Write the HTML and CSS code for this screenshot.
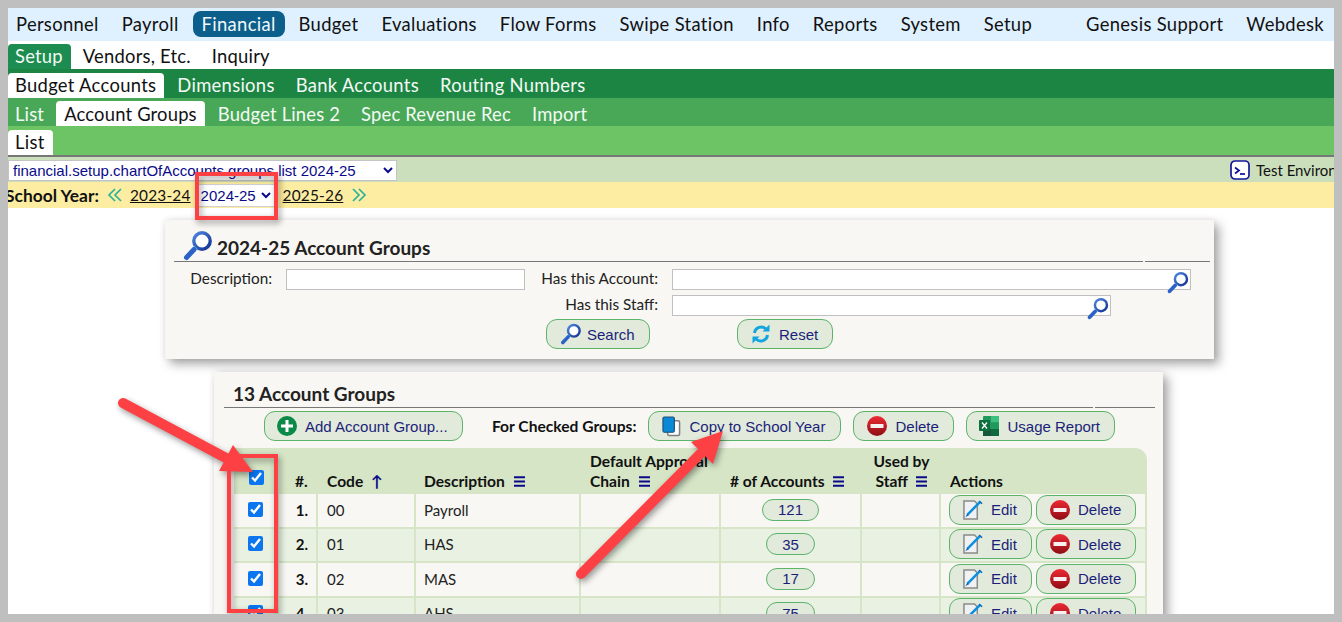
FILE: index.html
```html
<!DOCTYPE html>
<html lang="en">
<head>
<meta charset="utf-8">
<title>2024-25 Account Groups</title>
<link rel="stylesheet" href="styles.css">
</head>
<body>
<svg class="defs" aria-hidden="true">
  <defs>
    <linearGradient id="redg" x1="0" y1="0" x2="0" y2="1"><stop offset="0" stop-color="#ee2a33"/><stop offset="1" stop-color="#8e0d14"/></linearGradient>
    <linearGradient id="ringg" x1="0" y1="0" x2="1" y2="1"><stop offset="0" stop-color="#4f86e0"/><stop offset="1" stop-color="#12318f"/></linearGradient>
    <symbol id="i-mag" viewBox="0 0 30 31">
      <circle cx="19" cy="11" r="8.2" fill="#fff" stroke="url(#ringg)" stroke-width="3.4"/>
      <path d="M13 17.5 11 19.5" stroke="#5fc3e8" stroke-width="4"/>
      <path d="M11 19.5 3.5 27.5" stroke="#2c62c8" stroke-width="5" stroke-linecap="round"/>
    </symbol>
    <symbol id="i-plus" viewBox="0 0 20 20">
      <circle cx="10" cy="10" r="10" fill="#0b8a47"/>
      <path d="M10 4v12M4 10h12" stroke="#fff" stroke-width="3"/>
    </symbol>
    <symbol id="i-minus" viewBox="0 0 20 20">
      <circle cx="10" cy="10" r="10" fill="url(#redg)"/>
      <rect x="3.5" y="8" width="13" height="4" rx=".5" fill="#f6f0f0"/>
    </symbol>
    <symbol id="i-copy" viewBox="0 0 20 22">
      <rect x="6" y="5" width="12.5" height="15.5" rx="1.5" fill="#fff" stroke="#808080" stroke-width="1.6"/>
      <rect x="1" y="1" width="12" height="16" rx="1.5" fill="#0a8ad6" stroke="#1f4d7a" stroke-width="1.2"/>
    </symbol>
    <symbol id="i-xls" viewBox="0 0 20 20">
      <rect x="4" y="0" width="16" height="20" rx="1" fill="#1f9a5c"/>
      <rect x="12" y="0" width="8" height="6.5" fill="#3cc07f"/>
      <rect x="12" y="6.5" width="8" height="6.5" fill="#1f9a5c"/>
      <rect x="12" y="13" width="8" height="7" fill="#0f6b3d"/>
      <rect x="4" y="13" width="8" height="7" fill="#14573a"/>
      <rect x="0" y="4" width="11" height="11" rx="1" fill="#0f6e3e"/>
      <path d="M3 6.5 8 12.5M8 6.5 3 12.5" stroke="#fff" stroke-width="1.3"/>
    </symbol>
    <symbol id="i-edit" viewBox="0 0 21 21">
      <path d="M1 1h11l3 3v16H1z" fill="#f0f1f2" stroke="#8b8b8b" stroke-width="1.6"/>
      <path d="M4.5 15.5 18 2" stroke="#0b8fe0" stroke-width="2.6"/>
      <path d="M2.5 18 4.5 14.5 6 16z" fill="#0b5fa8"/>
      <path d="M17 1l3 3" stroke="#0a6ab5" stroke-width="1.6"/>
    </symbol>
    <symbol id="i-reset" viewBox="0 0 20 20">
      <path d="M3.5 9A6.8 6.8 0 0 1 15 5" fill="none" stroke="#13a5dd" stroke-width="3"/>
      <path d="M11.5 7.5h7v-7z" fill="#13a5dd"/>
      <path d="M16.5 11A6.8 6.8 0 0 1 5 15" fill="none" stroke="#13a5dd" stroke-width="3"/>
      <path d="M8.5 12.5h-7v7z" fill="#13a5dd"/>
    </symbol>
    <symbol id="i-term" viewBox="0 0 20 20">
      <rect x="1" y="1" width="18" height="18" rx="4" fill="#fff" stroke="#17179a" stroke-width="1.7"/>
      <path d="M5 7.5 9 10.5 5 13.5" fill="none" stroke="#0d0da0" stroke-width="1.7"/>
      <path d="M10 14h5" stroke="#0d0da0" stroke-width="1.7"/>
    </symbol>
    <symbol id="i-left" viewBox="0 0 16 16">
      <path d="M8 2 2 8l6 6M14 2 8 8l6 6" fill="none" stroke="#2bb39a" stroke-width="1.7"/>
    </symbol>
    <symbol id="i-right" viewBox="0 0 16 16">
      <path d="M2 2l6 6-6 6M8 2l6 6-6 6" fill="none" stroke="#2bb39a" stroke-width="1.7"/>
    </symbol>
    <symbol id="i-menu" viewBox="0 0 11 11">
      <path d="M0 1.2h11M0 5.5h11M0 9.8h11" stroke="#0a0a8a" stroke-width="2"/>
    </symbol>
  </defs>
</svg>

<div class="frame">
  <nav class="nav nav-top">
    <a class="nav-item nav-first">Personnel</a>
    <a class="nav-item">Payroll</a>
    <a class="nav-item nav-current">Financial</a>
    <a class="nav-item">Budget</a>
    <a class="nav-item">Evaluations</a>
    <a class="nav-item">Flow Forms</a>
    <a class="nav-item">Swipe Station</a>
    <a class="nav-item">Info</a>
    <a class="nav-item">Reports</a>
    <a class="nav-item">System</a>
    <a class="nav-item">Setup</a>
    <a class="nav-item nav-push">Genesis Support</a>
    <a class="nav-item">Webdesk</a>
  </nav>
  <nav class="nav nav-l2">
    <a class="tab tab-green">Setup</a>
    <a class="tab tab-dark">Vendors, Etc.</a>
    <a class="tab tab-dark">Inquiry</a>
  </nav>
  <nav class="nav nav-l3">
    <a class="tab tab-white">Budget Accounts</a>
    <a class="tab">Dimensions</a>
    <a class="tab">Bank Accounts</a>
    <a class="tab">Routing Numbers</a>
  </nav>
  <nav class="nav nav-l4">
    <a class="tab">List</a>
    <a class="tab tab-white">Account Groups</a>
    <a class="tab">Budget Lines 2</a>
    <a class="tab">Spec Revenue Rec</a>
    <a class="tab">Import</a>
  </nav>
  <nav class="nav nav-l5">
    <a class="tab tab-white">List</a>
  </nav>

  <div class="env-row">
    <select class="page-select"><option>financial.setup.chartOfAccounts.groups.list 2024-25</option></select>
    <div class="env">
      <svg class="env-icon"><use href="#i-term"/></svg>
      <span>Test Environment</span>
    </div>
  </div>

  <div class="year-row">
    <b class="year-label">School Year:</b>
    <svg class="chev"><use href="#i-left"/></svg>
    <a class="year-link">2023-24</a>
    <select class="year-select"><option>2024-25</option></select>
    <a class="year-link">2025-26</a>
    <svg class="chev"><use href="#i-right"/></svg>
  </div>

  <section class="panel panel-search">
    <div class="panel-head">
      <h2 class="panel-title">
        <svg class="title-icon"><use href="#i-mag"/></svg>
        2024-25 Account Groups
      </h2>
      <span class="panel-tail"></span>
    </div>
    <div class="search-grid">
      <label class="lbl">Description:</label>
      <input class="field" type="text">
      <label class="lbl">Has this Account:</label>
      <div class="field field-wide"><svg class="field-icon"><use href="#i-mag"/></svg></div>
      <label class="lbl lbl-second">Has this Staff:</label>
      <div class="field field-mid"><svg class="field-icon"><use href="#i-mag"/></svg></div>
    </div>
    <div class="search-actions">
      <a class="btn btn-search"><svg class="ico ico-mag"><use href="#i-mag"/></svg>Search</a>
      <a class="btn btn-reset"><svg class="ico"><use href="#i-reset"/></svg>Reset</a>
    </div>
  </section>

  <section class="panel panel-list">
    <div class="panel-head panel-head-list">
      <h2 class="panel-title">13 Account Groups</h2>
      <span class="panel-tail"></span>
    </div>
    <div class="toolbar">
      <a class="btn btn-add"><svg class="ico"><use href="#i-plus"/></svg>Add Account Group...</a>
      <b class="toolbar-label">For Checked Groups:</b>
      <a class="btn btn-copy"><svg class="ico ico-copy"><use href="#i-copy"/></svg>Copy to School Year</a>
      <a class="btn btn-del"><svg class="ico"><use href="#i-minus"/></svg>Delete</a>
      <a class="btn btn-usage"><svg class="ico"><use href="#i-xls"/></svg>Usage Report</a>
    </div>
    <table class="grid">
      <colgroup>
        <col class="c-check"><col class="c-num"><col class="c-code"><col class="c-desc">
        <col class="c-chain"><col class="c-acc"><col class="c-used"><col class="c-act">
      </colgroup>
      <thead>
        <tr>
          <th class="center th-check"><input class="chk" type="checkbox" checked></th>
          <th class="th-num">#.</th>
          <th>Code <span class="sort">↑</span></th>
          <th class="col-desc">Description <svg class="menu"><use href="#i-menu"/></svg></th>
          <th>Default Approval<br>Chain <svg class="menu"><use href="#i-menu"/></svg></th>
          <th># of Accounts <svg class="menu"><use href="#i-menu"/></svg></th>
          <th class="center">Used by<br>Staff <svg class="menu"><use href="#i-menu"/></svg></th>
          <th>Actions</th>
        </tr>
      </thead>
      <tbody>
        <tr>
          <td class="center"><input class="chk" type="checkbox" checked></td>
          <td class="num">1.</td><td>00</td><td class="col-desc">Payroll</td><td></td>
          <td class="center"><a class="pill pill-wide">121</a></td><td></td>
          <td class="act"><div class="act-row"><a class="btn btn-edit"><svg class="ico"><use href="#i-edit"/></svg>Edit</a><a class="btn"><svg class="ico"><use href="#i-minus"/></svg>Delete</a></div></td>
        </tr>
        <tr>
          <td class="center"><input class="chk" type="checkbox" checked></td>
          <td class="num">2.</td><td>01</td><td class="col-desc">HAS</td><td></td>
          <td class="center"><a class="pill">35</a></td><td></td>
          <td class="act"><div class="act-row"><a class="btn btn-edit"><svg class="ico"><use href="#i-edit"/></svg>Edit</a><a class="btn"><svg class="ico"><use href="#i-minus"/></svg>Delete</a></div></td>
        </tr>
        <tr>
          <td class="center"><input class="chk" type="checkbox" checked></td>
          <td class="num">3.</td><td>02</td><td class="col-desc">MAS</td><td></td>
          <td class="center"><a class="pill">17</a></td><td></td>
          <td class="act"><div class="act-row"><a class="btn btn-edit"><svg class="ico"><use href="#i-edit"/></svg>Edit</a><a class="btn"><svg class="ico"><use href="#i-minus"/></svg>Delete</a></div></td>
        </tr>
        <tr>
          <td class="center"><input class="chk" type="checkbox" checked></td>
          <td class="num">4.</td><td>03</td><td class="col-desc">AHS</td><td></td>
          <td class="center"><a class="pill">75</a></td><td></td>
          <td class="act"><div class="act-row"><a class="btn btn-edit"><svg class="ico"><use href="#i-edit"/></svg>Edit</a><a class="btn"><svg class="ico"><use href="#i-minus"/></svg>Delete</a></div></td>
        </tr>
      </tbody>
    </table>
  </section>
</div>

<svg class="marks" viewBox="0 0 1342 622" aria-hidden="true">
  <rect class="mark-box" x="197" y="174" width="79" height="44"/>
  <rect class="mark-box" x="229" y="456" width="47" height="155"/>
  <path class="mark-line" d="M123 403 226 458"/>
  <path class="mark-head" d="M219 471 233 445 253 472z"/>
  <path class="mark-line" d="M581 574 702 452"/>
  <path class="mark-head" d="M691 442 713 464 723 431z"/>
</svg>
</body>
</html>
```
FILE: styles.css
```css
* { box-sizing: border-box; }
html, body { margin: 0; height: 622px; overflow: hidden; }
body { background: #bfbfbf; font-family: "Lato", "Liberation Sans", sans-serif; color: #111; position: relative; }
a { cursor: pointer; }
.defs { position: absolute; width: 0; height: 0; }

.frame { margin: 8px; width: 1326px; height: 606px; background: #fff; overflow: hidden; }

/* navigation bars */
.nav { display: flex; align-items: flex-end; font-size: 18.4px; letter-spacing: .3px; white-space: nowrap; }
.nav-top { height: 33px; background: #dff0fe; align-items: center; gap: 5px; padding-bottom: 1px; letter-spacing: .32px; }
.nav-item { padding: 0 9px; height: 26px; line-height: 27px; border-radius: 8px; color: #111; }
.nav-first { margin-left: -1px; }
.nav-current { background: #0b5f8a; color: #f2f8fb; }
.nav-push { margin-left: 31px; }
.nav-l2 { height: 28px; background: #fff; gap: 5px; letter-spacing: .22px; }
.nav-l2 .tab:first-child { margin-right: -1px; }
.nav-l3 { height: 29px; background: #1c8544; gap: 5px; }
.nav-l4 { height: 28px; background: #49a858; gap: 5px; letter-spacing: .18px; }
.nav-l4 .tab { line-height: 26px; }
.nav-l4 .tab:first-child { margin-right: -1px; }
.nav-l5 { height: 31px; background: #6cc464; border-bottom: 2px solid #777; padding-bottom: 0; }
.tab { height: 25px; line-height: 25px; padding: 0 8px; color: #f4faf5; border-radius: 4px 4px 0 0; }
.tab:first-child { padding-left: 7px; }
.tab-white { background: #fff; color: #111; }
.tab-green { background: #1c8c50; color: #f4faf5; }
.tab-dark { color: #111; }

/* environment and year rows */
.env-row { height: 25px; background: #ccdfbc; display: flex; align-items: center; }
.page-select { width: 389px; height: 21px; flex: none; margin-top: 1px; font: 15px "Liberation Sans", sans-serif; color: #0a0a8a; background: #fff; border: 1px solid #c4c4c4; border-radius: 0; padding: 0; }
.env { flex: none; margin-left: 833px; display: flex; align-items: center; gap: 6px; font-size: 15px; white-space: nowrap; }
.env-icon { width: 20px; height: 20px; }
.year-row { height: 26px; background: #fdeda2; display: flex; align-items: center; font-size: 15.4px; white-space: nowrap; }
.year-label { margin-left: -3px; font-size: 17.4px; font-weight: 700; color: #111; }
.chev { width: 16px; height: 16px; margin: 0 7px 0 8px; flex: none; }
.chev:last-child { margin: 0 0 0 8px; }
.year-link { text-decoration: underline; color: #111; letter-spacing: .2px; }
.year-select { width: 79px; height: 23px; margin: 1px 8px 0 5px; font: 15px "Liberation Sans", sans-serif; color: #0a0a8a; background: #fff; border: 1px solid #d0d0d0; border-radius: 0; padding: 0; }

/* panels */
.panel { background: #f8f7f3; box-shadow: 5px 5px 10px rgba(0, 0, 0, .35), 0 0 6px rgba(0, 0, 0, .08); }
.panel-search { width: 1049px; margin: 12px 0 13px 157px; height: 139px; padding: 0 4px 0 9px; }
.panel-list { width: 949px; margin-left: 206px; height: 300px; padding: 0 8px 0 10px; }
.panel-head { display: flex; gap: 2px; align-items: flex-end; height: 42px; }
.panel-head-list { height: 36px; }
.panel-title { flex: 1; margin: 0; height: 100%; display: flex; align-items: flex-end; padding-bottom: 2px; border-bottom: 1px solid #777; font-size: 19px; line-height: 22px; font-weight: 700; color: #222; }
.panel-head-list .panel-title { padding-left: 9px; }
.panel-tail { width: 60px; border-bottom: 1px solid #777; }
.panel-search .panel-tail { width: 65px; }
.title-icon { width: 30px; height: 31px; margin: 0 4px -2px 9px; flex: none; }

.search-grid { display: grid; grid-template-columns: 98px 239px 119px 519px; column-gap: 14px; row-gap: 5px; margin-top: 7px; font: 15.3px "Lato", sans-serif; }
.lbl { text-align: right; line-height: 19px; color: #222; }
.lbl-second { grid-column: 3; }
.field { height: 21px; border: 1px solid #c0c0c0; background: #fff; display: block; padding: 0; position: relative; }
.field-mid { width: 439px; }
.field-icon { position: absolute; right: 1px; top: 1px; width: 22px; height: 23px; }
.search-actions { display: flex; gap: 87px; margin: 3px 0 0 372px; }

/* buttons */
.btn { display: inline-flex; align-items: center; gap: 8px; height: 30px; padding: 0 14px 0 13px; border: 1px solid #5cb36a; border-radius: 11px; background: #e2eadb; color: #1b1f7a; font: 15px "Liberation Sans", sans-serif; white-space: nowrap; flex: none; }
.ico { width: 20px; height: 20px; flex: none; }
.ico-copy { width: 19px; height: 21px; }
.ico-mag { width: 22px; height: 22px; margin-right: -3px; }
.btn-search { width: 104px; }
.btn-reset { width: 96px; }
.btn-add { width: 199px; margin-right: 17px; padding-left: 12px; }
.btn-copy { width: 193px; }
.btn-del { width: 101px; }
.btn-usage { width: 149px; padding-left: 12px; }
.btn-edit { width: 83px; }

.toolbar { display: flex; align-items: center; gap: 12px; margin: 3px 0 0 40px; height: 30px; }
.toolbar-label { font-size: 15.6px; font-weight: 700; color: #111; }

/* table */
.grid { border-collapse: separate; border-spacing: 0; table-layout: fixed; width: 913px; margin: 7px 0 0 10px; font-size: 15px; }
.c-check { width: 45px; } .c-num { width: 39px; } .c-code { width: 98px; } .c-desc { width: 165px; }
.c-chain { width: 140px; } .c-acc { width: 141px; } .c-used { width: 79px; } .c-act { width: 206px; }
.grid th { background: #d5e5c6; height: 46px; padding: 0 0 3px 9px; vertical-align: bottom; text-align: left; font-size: 15.6px; line-height: 20px; font-weight: 700; color: #111; white-space: nowrap; }
.grid th:last-child { border-top-right-radius: 12px; }
.grid th.center { text-align: center; padding-left: 0; }
.grid th.th-check { padding-bottom: 9px; }
.grid th.th-num { padding-left: 16px; }
.grid th.col-desc, .grid td.col-desc { padding-left: 8px; }
.grid td { height: 34.5px; padding: 0 0 1px 9px; border-right: 2px solid #d5e5c6; border-bottom: 2px solid #d5e5c6; vertical-align: middle; color: #222; }
.grid tbody tr:nth-child(even) td { background: #e8f1e2; }
.grid td.center { text-align: center; padding-left: 0; }
.grid td.num { padding: 0 8px 1px 0; text-align: right; font-weight: 700; color: #111; }
.grid td.act { padding-left: 8px; }
.chk { display: block; width: 15px; height: 15px; margin: -1px auto 0; accent-color: #0b76f0; }
.sort { color: #0a0a8a; margin-left: 4px; font-weight: 700; }
.menu { width: 11px; height: 11px; margin-left: 5px; }
.pill { display: inline-flex; align-items: center; justify-content: center; width: 49px; height: 22px; border: 1px solid #5cb36a; border-radius: 11px; background: #e2eadb; color: #1b1f7a; font: 15px "Liberation Sans", sans-serif; }
.pill-wide { width: 57px; }
.act-row { display: flex; gap: 4px; }

/* annotation overlay */
.marks { position: absolute; left: 0; top: 0; width: 1342px; height: 622px; filter: drop-shadow(2px 3px 3px rgba(0, 0, 0, .4)); pointer-events: none; clip-path: inset(0 0 8px 0); }
.mark-box { fill: none; stroke: #fd4044; stroke-width: 4; }
.mark-line { fill: none; stroke: #fd4044; stroke-width: 10; stroke-linecap: round; }
.mark-head { fill: #fd4044; }
```
